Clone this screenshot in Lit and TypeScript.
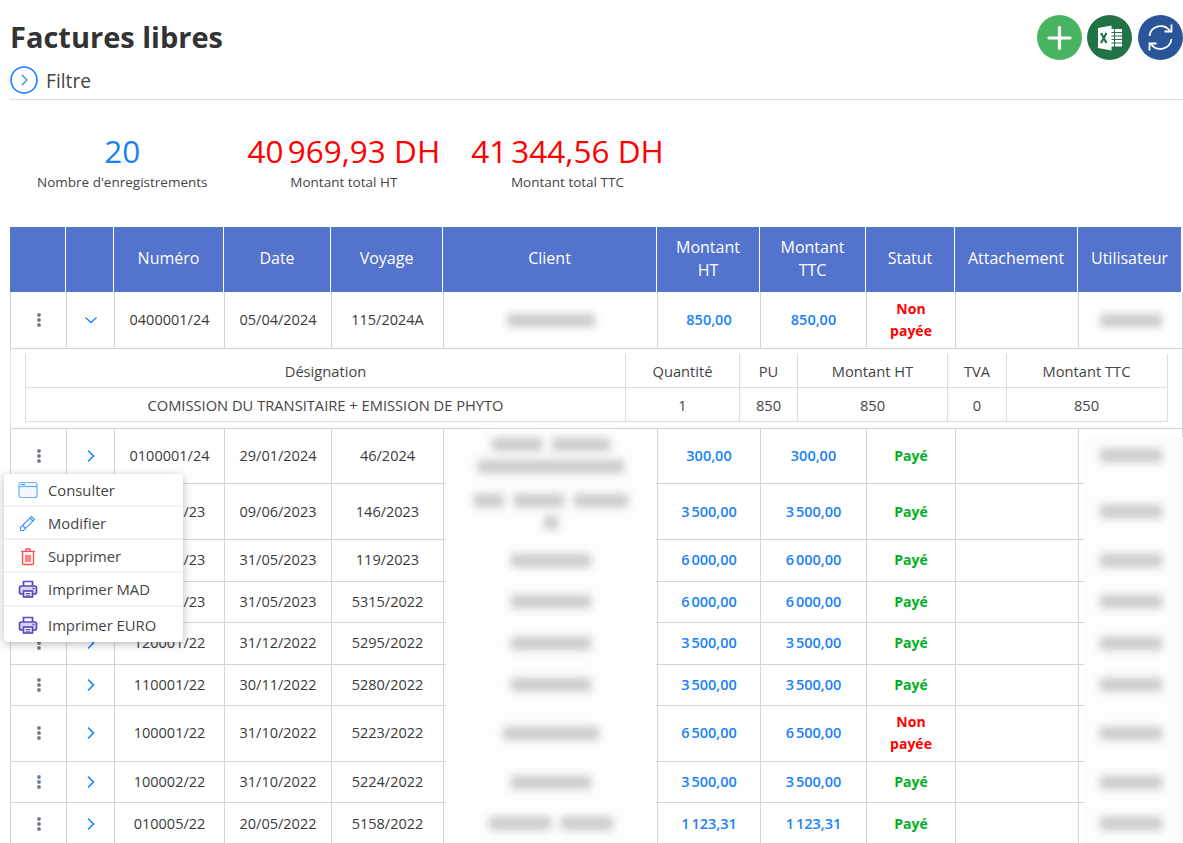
import { LitElement, css, html, nothing, svg } from "lit";
import { customElement } from "lit/decorators.js";

type Row = {
  num: string;
  date: string;
  voyage: string;
  amount: string;
  paid: boolean;
  tall?: boolean;
  open?: boolean;
  client: number[][];
};

const n = "\u202f";

const rows: Row[] = [
  { num: "0400001/24", date: "05/04/2024", voyage: "115/2024A", amount: "850,00", paid: false, open: true, client: [[88]] },
  { num: "0100001/24", date: "29/01/2024", voyage: "46/2024", amount: "300,00", paid: true, tall: true, client: [[50, 58], [146]] },
  { num: "060001/23", date: "09/06/2023", voyage: "146/2023", amount: `3${n}500,00`, paid: true, tall: true, client: [[30, 50, 54], [14]] },
  { num: "050002/23", date: "31/05/2023", voyage: "119/2023", amount: `6${n}000,00`, paid: true, client: [[80]] },
  { num: "050001/23", date: "31/05/2023", voyage: "5315/2022", amount: `6${n}000,00`, paid: true, client: [[80]] },
  { num: "120001/22", date: "31/12/2022", voyage: "5295/2022", amount: `3${n}500,00`, paid: true, client: [[80]] },
  { num: "110001/22", date: "30/11/2022", voyage: "5280/2022", amount: `3${n}500,00`, paid: true, client: [[80]] },
  { num: "100001/22", date: "31/10/2022", voyage: "5223/2022", amount: `6${n}500,00`, paid: false, tall: true, client: [[96]] },
  { num: "100002/22", date: "31/10/2022", voyage: "5224/2022", amount: `3${n}500,00`, paid: true, client: [[80]] },
  { num: "010005/22", date: "20/05/2022", voyage: "5158/2022", amount: `1${n}123,31`, paid: true, client: [[62, 52]] },
];

const headers = ["", "", "Numéro", "Date", "Voyage", "Client", "Montant HT", "Montant TTC", "Statut", "Attachement", "Utilisateur"];

const dots = svg`<circle cx="4" cy="3" r="1.900"/><circle cx="4" cy="8" r="1.900"/><circle cx="4" cy="13" r="1.900"/>`;

const printer = svg`
  <path d="M5.500 7V2.500h9V7" fill="none"/>
  <rect x="1.500" y="7" width="17" height="8" rx="2" fill="#d9d4f3"/>
  <rect x="5.500" y="12" width="9" height="6" fill="#fff"/>
  <path d="M7.500 14.500h5M7.500 16.200h5" stroke-width="1"/>
  <path d="M14.500 9.500h2" stroke-width="1.400"/>`;

@customElement("app-root")
export class AppRoot extends LitElement {
  renderBlur(lines: number[][]) {
    return html`<div class="blur-lines">
      ${lines.map(
        (parts) => html`<div class="blur-line">
          ${parts.map((w) => html`<span class="blur" style="width:${w}px"></span>`)}
        </div>`
      )}
    </div>`;
  }

  renderRow(r: Row) {
    const status = r.paid
      ? html`<span class="paid">Payé</span>`
      : html`<span class="unpaid">Non<br />payée</span>`;
    return html`
      <div class="row ${r.tall || r.open ? "tall" : "short"} ${r.open ? "first" : ""}">
        <div class="cell"><svg class="dots" width="8" height="16" viewBox="0 0 8 16">${dots}</svg></div>
        <div class="cell">
          ${r.open
            ? html`<svg width="14" height="8" viewBox="0 0 14 8" class="chev thin"><path d="M1.500 1.500 7 6.500l5.500-5"/></svg>`
            : html`<svg width="10" height="14" viewBox="0 0 10 14" class="chev"><path d="M2 1.500 7.500 7 2 12.500"/></svg>`}
        </div>
        <div class="cell">${r.num}</div>
        <div class="cell">${r.date}</div>
        <div class="cell">${r.voyage}</div>
        <div class="cell">${this.renderBlur(r.client)}</div>
        <div class="cell amount">${r.amount}</div>
        <div class="cell amount">${r.amount}</div>
        <div class="cell status">${status}</div>
        <div class="cell"></div>
        <div class="cell last">${this.renderBlur([[62]])}</div>
      </div>
      ${r.open ? this.renderDetail() : nothing}
    `;
  }

  renderDetail() {
    const head = ["Désignation", "Quantité", "PU", "Montant HT", "TVA", "Montant TTC"];
    const vals = ["COMISSION DU TRANSITAIRE + EMISSION DE PHYTO", "1", "850", "850", "0", "850"];
    return html`<div class="detail">
      <div class="inner">
        ${head.map((h) => html`<div class="icell top">${h}</div>`)}
        ${vals.map((v) => html`<div class="icell">${v}</div>`)}
      </div>
    </div>`;
  }

  render() {
    return html`
      <div class="page">
        <div class="top">
          <div>
            <h1>Factures libres</h1>
            <div class="filter">
              <svg width="28" height="28" viewBox="0 0 28 28">
                <circle cx="14" cy="14" r="13" fill="none" stroke="#1a82f7" stroke-width="1.600" />
                <path d="M12 9l5 5-5 5" fill="none" stroke="#1a82f7" stroke-width="1.100" />
              </svg>
              <span>Filtre</span>
            </div>
          </div>
          <div class="actions">
            <div class="btn green">
              <svg width="45" height="45" viewBox="0 0 45 45">
                <path d="M22.500 12.500v21M12 23h21" fill="none" stroke="#fff" stroke-width="3.200" stroke-linecap="round" />
              </svg>
            </div>
            <div class="btn excel">
              <svg width="45" height="45" viewBox="0 0 45 45">
                <rect x="24" y="14" width="11" height="17.500" fill="#fff" />
                <path d="M27.500 14v18M24 17.500h11M24 21h11M24 24.500h11M24 28h11" stroke="#217346" stroke-width="1" fill="none" />
                <path d="M11 13 24.500 10.500v25L11 33z" fill="#fff" />
                <path d="M14 18l5.500 10M19.500 18L14 28" stroke="#217346" stroke-width="2.200" fill="none" />
              </svg>
            </div>
            <div class="btn sync">
              <svg width="45" height="45" viewBox="0 0 45 45" fill="none" stroke="#fff" stroke-width="1.800">
                <path d="M11.500 21A11.300 11.300 0 0 1 32 16" />
                <path d="M33.500 9.500v7h-7" />
                <path d="M33.500 24A11.300 11.300 0 0 1 13 29" />
                <path d="M11.500 35.500v-7h7" />
              </svg>
            </div>
          </div>
        </div>

        <div class="stats">
          <div class="stat first">
            <div class="big blue">20</div>
            <div class="lbl">Nombre d'enregistrements</div>
          </div>
          <div class="stat">
            <div class="big red">40${n}969,93 DH</div>
            <div class="lbl">Montant total HT</div>
          </div>
          <div class="stat">
            <div class="big red">41${n}344,56 DH</div>
            <div class="lbl">Montant total TTC</div>
          </div>
        </div>

        <div class="thead">
          ${headers.map((h) => html`<div class="th">${h}</div>`)}
        </div>
        <div class="tbody">${rows.map((r) => this.renderRow(r))}</div>
      </div>

      <div class="patch client"></div>
      <div class="patch user"></div>

      <div class="menu">
        <div class="item">
          <svg width="20" height="18" viewBox="0 0 20 18" fill="none" stroke="#6aaef7" stroke-width="1.200">
            <rect x="1" y="1.500" width="18" height="15" rx="2" fill="#f3f9ff" />
            <path d="M1 5.500h18" />
            <path d="M3 3.500h4" stroke="#3d93f2" />
          </svg>
          Consulter
        </div>
        <div class="item">
          <svg width="20" height="20" viewBox="0 0 20 20" fill="none" stroke="#3f93f3" stroke-width="1.100">
            <path d="M2.500 14.500 13.500 3.500l3 3L5.500 17.500H2.500z" />
            <path d="M12 5l3 3M4.500 12.500l3 3" />
          </svg>
          Modifier
        </div>
        <div class="item">
          <svg width="20" height="20" viewBox="0 0 20 20" fill="none" stroke="#ff4d4d" stroke-width="1.300">
            <path d="M3 5.500h14M8 5V3h4v2" />
            <path d="M4.500 6v11.500a1 1 0 0 0 1 1h9a1 1 0 0 0 1-1V6" fill="#fff1f1" />
            <path d="M8 9v7M10 9v7M12 9v7" />
          </svg>
          Supprimer
        </div>
        <div class="item">
          <svg class="print" width="20" height="20" viewBox="0 0 20 20">${printer}</svg>
          Imprimer MAD
        </div>
        <div class="item">
          <svg class="print" width="20" height="20" viewBox="0 0 20 20">${printer}</svg>
          Imprimer EURO
        </div>
      </div>
    `;
  }

  static styles = css`
    :host {
      display: block;
      position: relative;
      height: 843px;
      overflow: hidden;
      background: #fff;
      color: #3a3a3a;
      font-family: "Open Sans", sans-serif;
      font-size: 14.500px;
      --body-cols: 56px 48px 110px 107px 112px 214px 103px 106px 89px 123px 105px;
      --head-cols: 55px 48px 110px 107px 112px 214px 103px 106px 89px 123px 104px;
    }

    .page {
      padding-left: 10px;
    }

    .top {
      display: flex;
      justify-content: space-between;
      height: 99px;
      border-bottom: 1px solid #dedede;
    }
    h1 {
      margin: 18px 0 0;
      font-size: 29px;
      line-height: 38px;
      font-weight: 700;
      color: #333;
    }
    .filter {
      display: flex;
      align-items: center;
      gap: 8px;
      margin-top: 10px;
      font-size: 19.200px;
      color: #444;
    }
    .filter svg {
      display: block;
    }

    .actions {
      display: flex;
      gap: 5px;
      margin-top: 15px;
    }
    .btn {
      width: 45px;
      height: 45px;
      border-radius: 50%;
    }
    .btn svg {
      display: block;
    }
    .green {
      background: #48b461;
    }
    .excel {
      background: #217346;
    }
    .sync {
      background: #2a5599;
      margin-left: 1px;
    }

    .stats {
      display: flex;
      gap: 31px;
      padding: 30px 0 35px 27px;
      text-align: center;
    }
    .stat.first {
      margin-right: 9px;
    }
    .big {
      font-size: 31.500px;
      line-height: 42px;
    }
    .blue {
      color: #1a82f7;
    }
    .red {
      color: #ff0000;
    }
    .lbl {
      font-size: 13.500px;
      line-height: 20px;
      color: #444;
    }

    .thead {
      display: grid;
      grid-template-columns: var(--head-cols);
      height: 65px;
    }
    .th {
      display: flex;
      align-items: center;
      justify-content: center;
      padding: 0 10px 2px;
      background: #5473cc;
      border-left: 1px solid #fff;
      color: #fff;
      font-size: 16px;
      font-weight: 500;
      line-height: 23px;
      text-align: center;
    }
    .th:first-child {
      border-left: 0;
    }

    .row {
      display: grid;
      grid-template-columns: var(--body-cols);
    }
    .row.short {
      height: 41.500px;
    }
    .row.tall {
      height: 55.750px;
    }
    .row.first {
      height: 57px;
    }
    .cell {
      display: flex;
      align-items: center;
      justify-content: center;
      border-left: 1px solid #d4d4d4;
      border-bottom: 1px solid #d4d4d4;
      line-height: 22px;
      text-align: center;
    }
    .cell.last {
      border-right: 1px solid #d4d4d4;
    }
    .dots {
      fill: #6f7d8c;
    }
    .chev {
      fill: none;
      stroke: #1a82f7;
      stroke-width: 1.600;
    }
    .chev.thin {
      stroke-width: 1.300;
    }
    .amount {
      color: #1a82f7;
      font-weight: 600;
    }
    .status {
      font-weight: 700;
      font-size: 14px;
    }
    .paid {
      color: #00b01e;
    }
    .unpaid {
      color: #ff0000;
    }

    .blur-lines {
      display: flex;
      flex-direction: column;
      align-items: center;
      gap: 9px;
      position: relative;
      z-index: 2;
    }
    .blur-line {
      display: flex;
      gap: 10px;
    }
    .blur {
      display: block;
      height: 13px;
      background: #c9c9c9;
      filter: blur(4.500px);
    }

    .detail {
      height: 79.600px;
      box-sizing: border-box;
      padding: 5px 15px 0 14px;
      border-left: 1px solid #e4e4e4;
      border-right: 1px solid #d4d4d4;
      border-bottom: 1px solid #d4d4d4;
      width: 1173px;
      font-size: 14.700px;
    }
    .inner {
      display: grid;
      grid-template-columns: 600px 114px 58px 150px 59px 160px;
      border-right: 1px solid #e0dcdc;
      border-bottom: 1px solid #e0dcdc;
      width: 1142px;
    }
    .icell {
      display: flex;
      align-items: center;
      justify-content: center;
      height: 33px;
      border-left: 1px solid #e0dcdc;
      color: #444;
    }
    .icell.top {
      height: 33px;
      border-bottom: 1px solid #e0dcdc;
    }

    .patch {
      position: absolute;
      bottom: 0;
      background: #fdfdfd;
      z-index: 1;
    }
    .patch.client {
      left: 446px;
      width: 210px;
      top: 433px;
    }
    .patch.user {
      left: 1084px;
      right: 0;
      top: 437px;
      background: linear-gradient(90deg, #fdfdfd 85%, #f8f8f8);
    }

    .menu {
      position: absolute;
      left: 4px;
      top: 474px;
      width: 179px;
      height: 168px;
      display: flex;
      flex-direction: column;
      background: #fff;
      border-radius: 4px;
      box-shadow: 0 2px 10px rgba(0, 0, 0, 0.28);
      z-index: 3;
      font-size: 14.800px;
    }
    .item {
      box-sizing: border-box;
      height: 33px;
      display: flex;
      align-items: center;
      gap: 10px;
      padding-left: 14px;
      border-bottom: 2px solid #f2f2f2;
      color: #444;
    }
    .item:nth-child(4) {
      height: 34px;
    }
    .item:last-child {
      flex: 1;
      border-bottom: 0;
    }
    .item svg {
      flex: none;
    }
    .print {
      fill: #fff;
      stroke: #5b4ab8;
      stroke-width: 1.700;
    }
  `;
}

declare global {
  interface HTMLElementTagNameMap {
    "app-root": AppRoot;
  }
}
